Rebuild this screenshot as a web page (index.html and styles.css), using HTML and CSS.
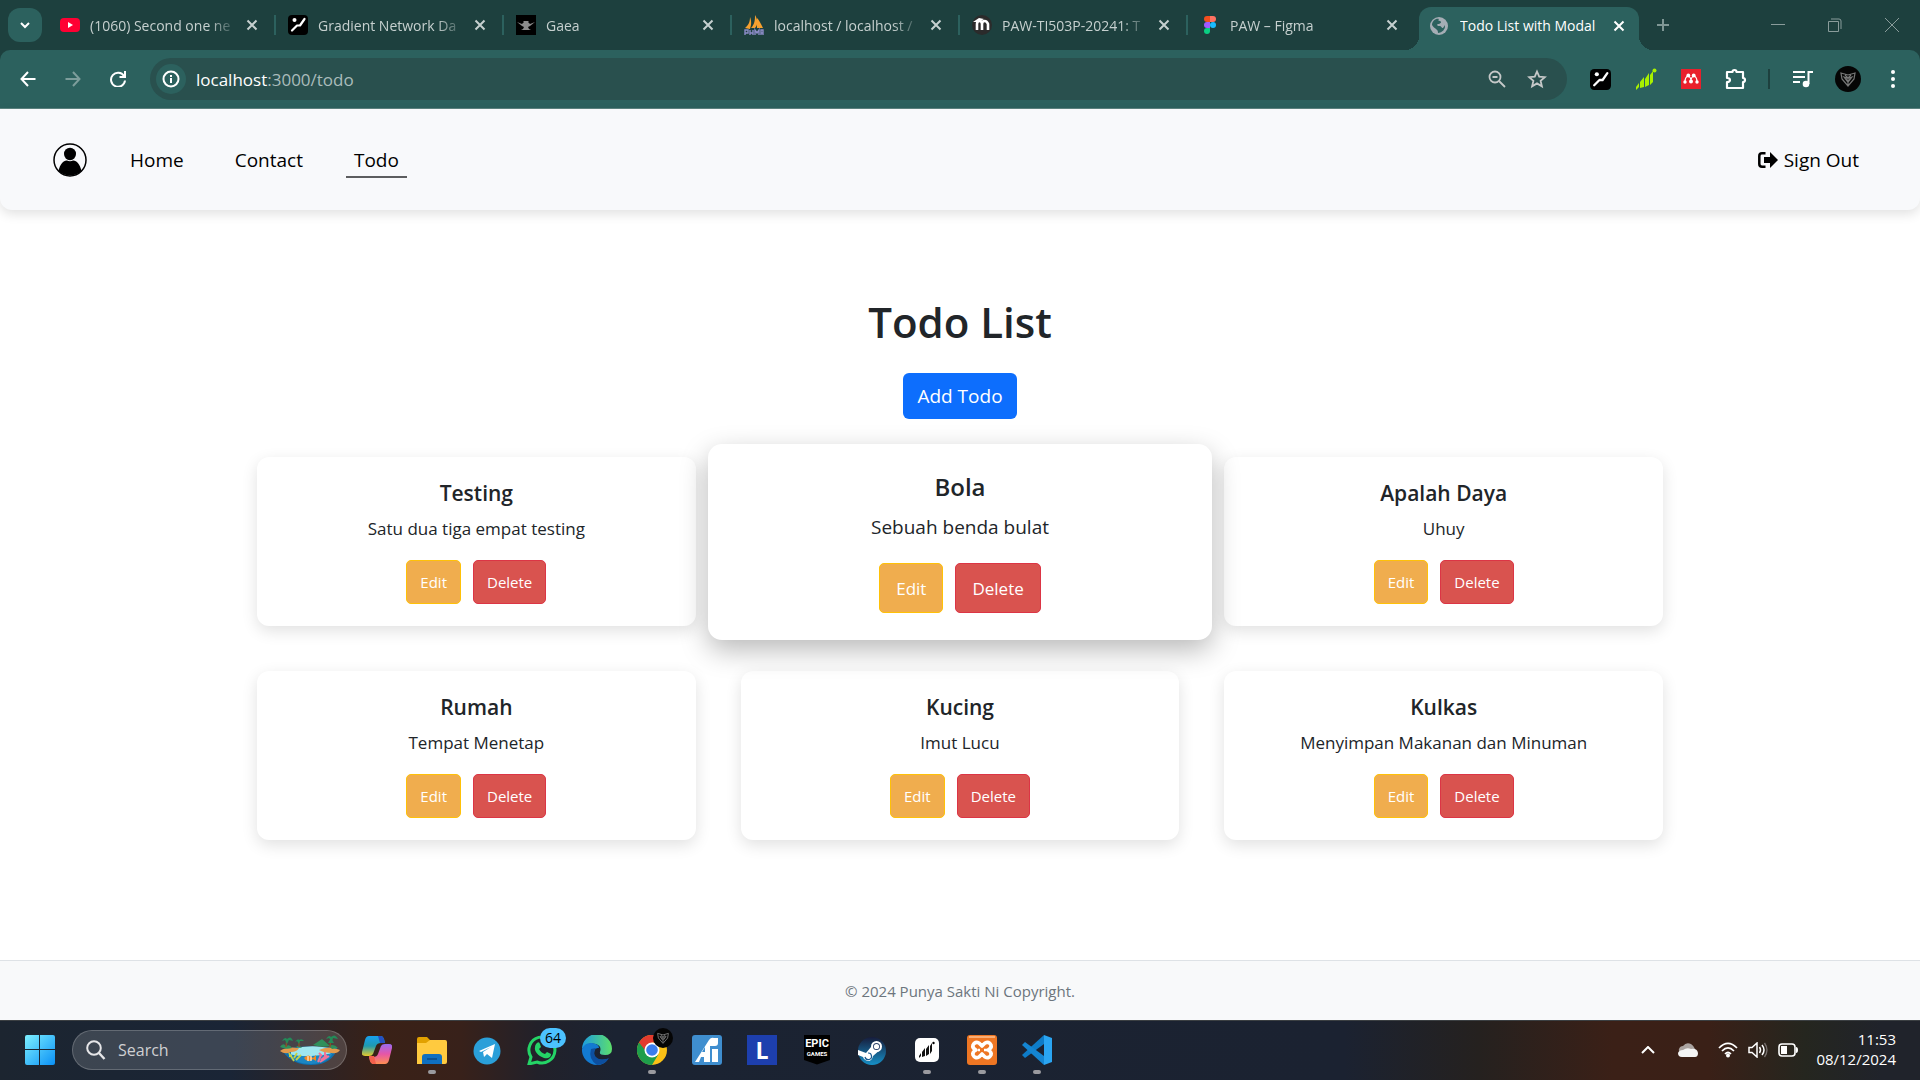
FILE: index.html
```html
<!DOCTYPE html>
<html lang="en">
<head>
<meta charset="utf-8">
<meta name="viewport" content="width=device-width, initial-scale=1">
<title>Todo List with Modal</title>
<link rel="stylesheet" href="styles.css">
</head>
<body>
<svg class="defs" aria-hidden="true">
  <symbol id="x" viewBox="0 0 12 12"><path d="M1.5 1.5l9 9m0-9l-9 9" fill="none" stroke="currentColor" stroke-width="2"/></symbol>
  <symbol id="gradient" viewBox="0 0 20 20"><rect width="20" height="20" rx="4"/><path d="M16.500 4 12 10.500H9L4 15.500" fill="none" stroke="#fff" stroke-width="2.200" stroke-linecap="round" stroke-linejoin="round"/><circle cx="6.500" cy="5" r="2" fill="#fff"/></symbol>
  <symbol id="crest" viewBox="0 0 26 26"><circle cx="13" cy="13" r="13" fill="#050505"/><path d="M6 7l7 2 7-2-1 6-6 7-6-7zM9 11l3 1v3zM17 11l-3 1v3zM13 14v5M10 9l3 3 3-3" fill="none" stroke="#777" stroke-width="1.200"/></symbol>
</svg>

<header class="browser">
  <div class="tabstrip">
    <button class="tab-search" aria-label="Search tabs"><svg viewBox="0 0 12 12" width="12" height="12"><path d="M2 4l4 4 4-4" fill="none" stroke="#fff" stroke-width="2"/></svg></button>
    <div class="tab">
      <svg class="favicon" viewBox="0 0 20 20"><rect y="3" width="20" height="14" rx="4" fill="#ff0033"/><path d="M8 7v6l5-3z" fill="#fff"/></svg>
      <span class="tab-title">(1060) Second one ne</span>
      <button class="tab-close" aria-label="Close tab"><svg width="12" height="12"><use href="#x"/></svg></button>
    </div>
    <div class="tab">
      <svg class="favicon"><use href="#gradient"/></svg>
      <span class="tab-title">Gradient Network Da</span>
      <button class="tab-close" aria-label="Close tab"><svg width="12" height="12"><use href="#x"/></svg></button>
    </div>
    <div class="tab">
      <svg class="favicon" viewBox="0 0 20 20"><rect width="20" height="20"/><path d="M1 7l5 2 2-2-1-1h6l-1 1 2 2 5-2-5 4-2 1 1 2 2 1H5l2-1 1-2-2-1z" fill="#8c8c8c"/></svg>
      <span class="tab-title">Gaea</span>
      <button class="tab-close" aria-label="Close tab"><svg width="12" height="12"><use href="#x"/></svg></button>
    </div>
    <div class="tab">
      <svg class="favicon" viewBox="0 0 20 20"><path d="M1 13C5 10 6 6 6 2c2 5 1 9 0 12zM7 13C11 9 11 4 11 0c3 5 3 10 0 13zM13 13V3c2 2 4 6 6 10z" fill="#f7a12f"/><path d="M1 20v-5h3v3H1m5 2v-5m0 3h3m0-3v5m2 0v-5l2 3 2-3v5m2 0v-5h2v5m-2-2h2" fill="none" stroke="#8c8cc8" stroke-width="1.400"/></svg>
      <span class="tab-title">localhost / localhost /</span>
      <button class="tab-close" aria-label="Close tab"><svg width="12" height="12"><use href="#x"/></svg></button>
    </div>
    <div class="tab">
      <svg class="favicon" viewBox="0 0 20 20"><circle cx="10" cy="10" r="10" fill="#2b2b2b"/><path d="M5 15V9q0-3 2.500-3T10 9v6m0-6q0-3 2.500-3T16 9v6" fill="none" stroke="#fff" stroke-width="2.600"/><path d="M1 7l6-4 5 1-5 3z" fill="#fff"/></svg>
      <span class="tab-title">PAW-TI503P-20241: T</span>
      <button class="tab-close" aria-label="Close tab"><svg width="12" height="12"><use href="#x"/></svg></button>
    </div>
    <div class="tab">
      <svg class="favicon" viewBox="0 0 20 20"><path d="M10 1H7a3 3 0 000 6h3z" fill="#f24e1e"/><path d="M10 1h3a3 3 0 010 6h-3z" fill="#ff7262"/><path d="M10 7H7a3 3 0 000 6h3z" fill="#a259ff"/><circle cx="13" cy="10" r="3" fill="#1abcfe"/><path d="M10 13H7a3 3 0 103 3z" fill="#0acf83"/></svg>
      <span class="tab-title">PAW – Figma</span>
      <button class="tab-close" aria-label="Close tab"><svg width="12" height="12"><use href="#x"/></svg></button>
    </div>
    <div class="tab tab-active">
      <svg class="favicon" viewBox="0 0 20 20"><circle cx="9" cy="10" r="9" fill="#a5adb5"/><path d="M9 3c-1 1-1 2 1 2 2 1 1 2-1 3-3 0-2 2 0 2 3 0 2 2 4 2l2-3a7 7 0 01-7 8c0-3-1-3-2-4S3 11 2 9c0-4 4-7 7-6z" fill="#2c615e"/></svg>
      <span class="tab-title">Todo List with Modal</span>
      <button class="tab-close" aria-label="Close tab"><svg width="12" height="12"><use href="#x"/></svg></button>
    </div>
    <button class="tab-new" aria-label="New tab"><svg viewBox="0 0 14 14" width="14" height="14"><path d="M7 1v12M1 7h12" stroke="#7f9795" stroke-width="2"/></svg></button>
    <div class="window-buttons">
      <button aria-label="Minimize"><svg viewBox="0 0 14 14" width="14" height="14"><path d="M0 6.500h14" stroke="#8a9c9b"/></svg></button>
      <button aria-label="Restore"><svg viewBox="0 0 14 14" width="14" height="14"><path d="M.5 3.500h10v10H.5zM3 1h8q2 0 2 2v8" fill="none" stroke="#8a9c9b"/></svg></button>
      <button aria-label="Close window"><svg viewBox="0 0 14 14" width="14" height="14"><path d="M0 0l14 14M14 0L0 14" stroke="#8a9c9b"/></svg></button>
    </div>
  </div>

  <div class="toolbar">
    <button class="tool" aria-label="Back"><svg viewBox="0 0 16 16" width="16" height="16"><path d="M15.500 8H2m6-7L1.500 8 8 15" fill="none" stroke="#fff" stroke-width="2"/></svg></button>
    <button class="tool" aria-label="Forward"><svg viewBox="0 0 16 16" width="16" height="16"><path d="M.5 8H14M8 1l6.500 7L8 15" fill="none" stroke="#7d9d9b" stroke-width="2"/></svg></button>
    <button class="tool" aria-label="Reload"><svg viewBox="0 0 16 16" width="16" height="16"><path d="M14 5A7 7 0 1015 9.500M15 0v6H9.500" fill="none" stroke="#fff" stroke-width="2"/></svg></button>
    <div class="omnibox">
      <button class="site-info" aria-label="Site information"><svg viewBox="0 0 18 18" width="18" height="18"><circle cx="9" cy="9" r="7.500" fill="none" stroke="#fff" stroke-width="2"/><path d="M9 8v5M9 5v2" stroke="#fff" stroke-width="2"/></svg></button>
      <span class="url"><b>localhost</b>:3000/todo</span>
      <button class="tool tool-narrow" aria-label="Zoom"><svg viewBox="0 0 18 18" width="18" height="18"><circle cx="7" cy="7" r="5.500" fill="none" stroke="#c5c8c8" stroke-width="1.800"/><path d="M11 11l6 6M4.500 7h5" stroke="#c5c8c8" stroke-width="1.800"/></svg></button>
      <button class="tool tool-narrow" aria-label="Bookmark"><svg viewBox="0 0 20 20" width="20" height="20"><path d="M10 2.500l2.200 5.100 5.600.5-4.200 3.700 1.300 5.500L10 14.400l-4.900 2.900 1.300-5.500L2.200 8.100l5.600-.5z" fill="none" stroke="#c5c8c8" stroke-width="1.800"/></svg></button>
    </div>
    <div class="extensions">
      <button class="tool" aria-label="Gradient"><svg width="21" height="21"><use href="#gradient"/></svg></button>
      <button class="tool" aria-label="Grass"><svg viewBox="0 0 22 22" width="22" height="22"><path d="M1 22v-3l3-4v4zM5 20v-6l4-5v10zM10 19v-8l4-6v12zM15 17V7l3-4v11z" fill="#a8f000"/><circle cx="19.500" cy="2.500" r="2" fill="#a8f000"/></svg></button>
      <button class="tool" aria-label="Mendeley"><svg viewBox="0 0 20 20" width="20" height="20"><rect width="20" height="20" fill="#e9202c"/><path d="M4 13q0-5 3-6 3 1 3 5 0-4 3-5 3 1 3 6" fill="none" stroke="#fff" stroke-width="1.200"/><g fill="#fff"><circle cx="7.300" cy="6.500" r="1.900"/><circle cx="12.700" cy="6.500" r="1.900"/><circle cx="4" cy="13" r="1.700"/><circle cx="10" cy="12.500" r="2"/><circle cx="16" cy="13" r="1.700"/></g></svg></button>
      <button class="tool" aria-label="Extensions"><svg viewBox="0 0 22 22" width="22" height="22"><path d="M2 4h5.500q0-2 2-2t2 2H18v6q2 0 2 2t-2 2v6H2v-6q3 0 3-2t-3-2z" fill="none" stroke="#fff" stroke-width="2.200" stroke-linejoin="round"/></svg></button>
      <span class="divider"></span>
      <button class="tool" aria-label="Media"><svg viewBox="0 0 20 18" width="20" height="18"><path d="M0 2h12M0 7h12M0 12h7M15.500 14V2H20" fill="none" stroke="#fff" stroke-width="2"/><circle cx="13" cy="14" r="3.300" fill="#fff"/></svg></button>
      <button class="tool" aria-label="Profile"><svg width="26" height="26"><use href="#crest"/></svg></button>
      <button class="tool" aria-label="Menu"><svg viewBox="0 0 6 20" width="6" height="20"><g fill="#fff"><circle cx="3" cy="3" r="2"/><circle cx="3" cy="10" r="2"/><circle cx="3" cy="17" r="2"/></g></svg></button>
    </div>
  </div>
</header>

<div class="page">
  <nav class="navbar">
    <svg class="avatar" viewBox="0 0 34 34"><circle cx="17" cy="17" r="16" fill="none" stroke="#000" stroke-width="1.500"/><ellipse cx="17" cy="11" rx="6" ry="6.200"/><path d="M5.500 28C7 21 11 17 14 17.500q3 1.500 6 0c3-.5 7 3.500 8.500 10.500A17 17 0 015.500 28z"/></svg>
    <a class="nav-link" href="#home">Home</a>
    <a class="nav-link" href="#contact">Contact</a>
    <a class="nav-link nav-current" href="#todo">Todo</a>
    <a class="sign-out" href="#signout"><svg viewBox="0 0 20 16" width="20" height="16"><path d="M7.500 1.300H4Q1.300 1.300 1.300 4v8q0 2.700 2.700 2.700h3.500" fill="none" stroke="#000" stroke-width="2.500"/><path d="M6 5h6V0l8 8-8 8v-5H6z"/></svg>Sign Out</a>
  </nav>

  <main class="content">
    <h1 class="heading">Todo List</h1>
    <button class="add">Add Todo</button>
    <div class="cards">
      <article class="card"><h2>Testing</h2><p>Satu dua tiga empat testing</p><div class="actions"><button class="btn btn-edit">Edit</button><button class="btn btn-delete">Delete</button></div></article>
      <article class="card card-raised"><h2>Bola</h2><p>Sebuah benda bulat</p><div class="actions"><button class="btn btn-edit">Edit</button><button class="btn btn-delete">Delete</button></div></article>
      <article class="card"><h2>Apalah Daya</h2><p>Uhuy</p><div class="actions"><button class="btn btn-edit">Edit</button><button class="btn btn-delete">Delete</button></div></article>
      <article class="card"><h2>Rumah</h2><p>Tempat Menetap</p><div class="actions"><button class="btn btn-edit">Edit</button><button class="btn btn-delete">Delete</button></div></article>
      <article class="card"><h2>Kucing</h2><p>Imut Lucu</p><div class="actions"><button class="btn btn-edit">Edit</button><button class="btn btn-delete">Delete</button></div></article>
      <article class="card"><h2>Kulkas</h2><p>Menyimpan Makanan dan Minuman</p><div class="actions"><button class="btn btn-edit">Edit</button><button class="btn btn-delete">Delete</button></div></article>
    </div>
  </main>

  <footer class="footer">© 2024 Punya Sakti Ni Copyright.</footer>
</div>

<div class="taskbar">
  <button class="start" aria-label="Start"><svg viewBox="0 0 30 30" width="30" height="30"><defs><linearGradient id="win" x2="1" y2="1"><stop stop-color="#7df0ff"/><stop offset="1" stop-color="#0a90f5"/></linearGradient></defs><path d="M0 2q0-2 2-2h12v14H0zM15 0h13q2 0 2 2v12H15zM0 15h14v15H2q-2 0-2-2zM15 15h15v13q0 2-2 2H15z" fill="url(#win)"/></svg></button>
  <label class="search">
    <svg viewBox="0 0 20 20" width="20" height="20"><circle cx="8" cy="8" r="6.800" fill="none" stroke="#e6e6e8" stroke-width="2"/><path d="M13 13l5.500 6" stroke="#e6e6e8" stroke-width="2.400"/></svg>
    <input type="text" placeholder="Search" aria-label="Search">
    <svg viewBox="0 0 62 32" width="62" height="32">
      <path d="M4 16Q20 10 58 14L57 18Q50 31 32 31T4 18z" fill="#0e6fae"/><path d="M12 15q20-5 38-1l2 7q-20 4-40 0z" fill="#9fe6ef"/><path d="M9 20q22 5 45-1-6 11-22 11T9 20z" fill="#1b87c4"/>
      <path d="M1 17q6-5 19-3-2 4-8 4-6 3-11-1zM40 16q10-5 21 0-3 4-8 3-8 0-13-3z" fill="#e39a4c"/><path d="M1 13q3-5 6-1 4-2 6 2-6 2-12-1zM17 13q3-3 6 1zM50 12q5-3 9 2l-6 1zM34 11l9-6 8 7q-8 2-17-1z" fill="#2f8f5b"/>
      <path d="M7 13l1-8M20 13V7M51 13l1-9" stroke="#875228" stroke-width="1.500"/><path d="M3 7q3-5 5-2 4-4 6 2l-4-1-2 4-2-4zM16 8q3-4 4-2 3-2 5 1l-4 0-1 3-2-3zM47 5q3-5 5-2 4-4 7 2l-5-1-1 4-3-4zM49 9l3-5 3 5" fill="#238a58"/>
      <path d="M10 19l5 8m-2-5l-3 0m5 2l3-5m-1 7l5-5" stroke="#c5d24a" stroke-width="1.800"/><path d="M39 28l3-7m0 5l6-5m-5 1l-3-3m6 3v-4m-5 10l9-6" stroke="#f0739a" stroke-width="2"/><path d="M25 24q4-5 9 0l3-3v6l-3-2q-5 5-9-1z" fill="#f58a1f"/><path d="M29 22v5M32 22v5" stroke="#fff"/>
    </svg>
  </label>
  <div class="apps">
    <button class="app" aria-label="Copilot"><svg viewBox="0 0 30 30"><defs><linearGradient id="c1" x2="0" y2="1"><stop stop-color="#18a0ee"/><stop offset=".5" stop-color="#1f9bb0"/><stop offset="1" stop-color="#e7cb2c"/></linearGradient><linearGradient id="c2" x2="0" y2="1"><stop stop-color="#9a6bf2"/><stop offset=".5" stop-color="#e656a7"/><stop offset="1" stop-color="#ff8f52"/></linearGradient></defs><path d="M7 1h12q2 0 3 3l1 4h-4q-4 0-5 3l-3 8q-1 2-4 2H3q-4 0-3-4L3 5q1-4 4-4z" fill="url(#c1)"/><path d="M16 1h3q2 0 3 3l1 4h-5z" fill="#2451c4"/><path d="M23 29H11q-2 0-3-3l-1-4h4q4 0 5-3l3-8q1-2 4-2h4q4 0 3 4l-3 12q-1 4-4 4z" fill="url(#c2)"/><path d="M7 21h5l2 8h-3q-2 0-3-3z" fill="#f4604c"/></svg></button>
    <button class="app app-open" aria-label="File Explorer"><svg viewBox="0 0 30 30"><path d="M0 4q0-2 2-2h8l3 3h14q2 0 2 2v5H0z" fill="#e2a100"/><path d="M0 8h9l4-3h15q2 0 2 2v20q0 2-2 2H0z" fill="#ffca3f"/><path d="M5 29v-7q0-3 3-3h14q3 0 3 3v7z" fill="#0f6fc0"/><path d="M10 24h10" stroke="#0a4a87" stroke-width="1.500"/></svg></button>
    <button class="app" aria-label="Telegram"><svg viewBox="0 0 30 30"><circle cx="15" cy="16" r="13.500" fill="#2a9fd9"/><path d="M7 16l16-7-3 14-5-4-3 3-1-5 8-5-10 5z" fill="#fff"/></svg></button>
    <button class="app" aria-label="WhatsApp"><svg viewBox="0 0 30 30"><path d="M2 29l2-7A13 13 0 1110 27z" fill="none" stroke="#24d466" stroke-width="3"/><path d="M10 8q2-2 3 1l1 3-2 2q2 4 6 5l2-2 4 2c0 4-4 5-7 4-6-2-10-7-9-11 0-2 1-3 2-4z" fill="#24d466"/></svg><span class="count">64</span></button>
    <button class="app" aria-label="Edge"><svg viewBox="0 0 30 30"><defs><linearGradient id="e1"><stop stop-color="#1c9be0"/><stop offset="1" stop-color="#5de06b"/></linearGradient></defs><path d="M0 14a15 15 0 0130 0q0 6-7 6-6 0-5-3 2-6-4-8Q5 7 0 14z" fill="url(#e1)"/><path d="M0 14q3-7 10-6 7 1 7 5-5-1-5 6 1 8 14 5-4 6-11 6A15 15 0 010 14z" fill="#137ad1"/><path d="M9 14q-3 10 6 16 8 0 12-7-9 4-14-2-2-4 1-8z" fill="#0d4f9f"/></svg></button>
    <button class="app app-open" aria-label="Chrome"><svg viewBox="0 0 30 30"><circle cx="15" cy="15" r="15" fill="#fbc116"/><path d="M15 15L2 7.500A15 15 0 0015 30l6-10z" fill="#1e9e4b"/><path d="M15 15H8L2 7.500A15 15 0 0128 7.500H15z" fill="#e33b2e"/><circle cx="15" cy="15" r="7.500" fill="#fff"/><circle cx="15" cy="15" r="5.800" fill="#3b7ded"/></svg><svg class="profile" viewBox="0 0 26 26"><use href="#crest"/></svg></button>
    <button class="app" aria-label="Ai"><svg viewBox="0 0 30 30"><rect width="30" height="30" rx="3" fill="#3f8ecf"/><path d="M3 27L17 5q2-3 5-2h4v5q0 3-3 3h-5v16h-6v-5H9l-2 5zM10 17h3v-5z" fill="#fff" fill-rule="evenodd"/><path d="M20 14h6v13h-6z" fill="#fff"/></svg></button>
    <button class="app app-letter" aria-label="L">L</button>
    <button class="app" aria-label="Epic Games"><span class="epic"><b>EPIC</b><small>GAMES</small></span></button>
    <button class="app" aria-label="Steam"><svg viewBox="0 0 30 30"><defs><linearGradient id="st" x2="0" y2="1"><stop stop-color="#171c3b"/><stop offset="1" stop-color="#1690c7"/></linearGradient></defs><circle cx="15" cy="16" r="14" fill="url(#st)"/><path d="M1 15l8 3 5-6 10 2-8 7q-1 5-5 5-4-1-5-4l-5-2z" fill="#fff"/><circle cx="19.500" cy="11.500" r="4.500" fill="#2b4169" stroke="#fff" stroke-width="2"/><circle cx="19.500" cy="11.500" r="2.600" fill="#fff"/><path d="M8 22a3.300 3.300 0 103-4" fill="none" stroke="#1a5b91" stroke-width="1.200"/></svg></button>
    <button class="app app-open" aria-label="Grass"><svg viewBox="0 0 30 30"><rect x="3" y="3" width="24" height="24" rx="5" fill="#fff"/><path d="M7 23v-2l2-3v3zM10 22v-5l3-4v8zM14 21v-7l3-4v9zM18 19v-8l2-3v8z" fill="#111"/><circle cx="21.500" cy="8" r="1.200"/></svg></button>
    <button class="app app-open" aria-label="XAMPP"><svg viewBox="0 0 30 30"><rect width="30" height="30" rx="3" fill="#ee7623"/><path d="M2 1h26v2H2z" fill="#f9ad74"/><path d="M9 15q-4-2-3-5 2-4 6-2l3 3 3-3q4-2 6 2 1 3-3 5 4 2 3 5-2 4-6 2l-3-3-3 3q-4 2-6-2-1-3 3-5z" fill="none" stroke="#fff" stroke-width="3.600" stroke-linejoin="round"/><path d="M11 15h2M17 15h3" stroke="#fff" stroke-width="2.500"/></svg></button>
    <button class="app app-open" aria-label="Visual Studio Code"><svg viewBox="0 0 30 30"><path d="M22 0l8 3v24l-8 3z" fill="#2aa5f2"/><path d="M22 0v9L3 23l-3-3z" fill="#0e7cc8"/><path d="M22 30v-9L3 7l-3 3z" fill="#1485d2"/></svg></button>
  </div>
  <div class="tray">
    <svg viewBox="0 0 14 8" width="14" height="8"><path d="M1 7l6-6 6 6" fill="none" stroke="#fff" stroke-width="2"/></svg>
    <svg class="cloud" viewBox="0 0 20 14" width="20" height="14"><path d="M4 9q-4 0-3-3t4-3q3-4 8-2 3 2 4 5z" fill="#aaa3a0"/><path d="M4 14q-4 0-4-4 1-3 5-3 4-3 8-1 6-1 7 4 0 4-3 4z" fill="#f4f4f4"/></svg>
    <svg viewBox="0 0 20 16" width="20" height="16"><path d="M1 6q9-9 18 0M4 9q6-6 12 0M7 12q3-3 6 0" fill="none" stroke="#fff" stroke-width="1.700"/><circle cx="10" cy="13.500" r="2" fill="#fff"/></svg>
    <svg viewBox="0 0 20 16" width="20" height="16"><path d="M1 5.500h3L9 1v14l-5-4.500H1z" fill="none" stroke="#fff" stroke-width="1.500"/><path d="M11.500 5q2 3 0 6M14 3q4 5 0 10" fill="none" stroke="#fff" stroke-width="1.500"/><path d="M16.500 1q5 7 0 14" fill="none" stroke="#77706e" stroke-width="1.300"/></svg>
    <svg viewBox="0 0 20 14" width="20" height="14"><rect x="1" y="1" width="16" height="12" rx="3" fill="none" stroke="#fff" stroke-width="1.600"/><path d="M3 3h6v8H3zM18 4q2 0 2 3t-2 3z" fill="#fff"/></svg>
    <div class="clock"><span>11:53</span><span>08/12/2024</span></div>
  </div>
</div>
</body>
</html>
```
FILE: styles.css
```css
* { box-sizing: border-box; }

body {
  margin: 0;
  min-height: 100vh;
  display: flex;
  flex-direction: column;
  font-family: "Open Sans", "Noto Sans", sans-serif;
  font-size: 19px;
  color: #212529;
  background: #fff;
}

button {
  font: inherit;
  color: inherit;
  border: 0;
  padding: 0;
  background: none;
}

svg { display: block; flex: none; }
.defs { position: absolute; width: 0; height: 0; }

/* Browser frame */
.browser { background: #1d403e; }

.tabstrip {
  display: flex;
  align-items: center;
  height: 50px;
  padding-left: 8px;
  color: #c6d0cf;
  font-size: 14px;
}

.tab-search {
  display: flex;
  align-items: center;
  justify-content: center;
  flex: none;
  width: 34px;
  height: 34px;
  margin-right: 6px;
  border-radius: 12px;
  background: #2c615e;
}

.tab {
  position: relative;
  display: flex;
  align-items: center;
  flex: 0 1 228px;
  min-width: 0;
  height: 42px;
  padding: 0 18px 0 12px;
}

.tab:not(.tab-active)::after {
  content: "";
  position: absolute;
  right: 0;
  top: 11px;
  width: 2px;
  height: 20px;
  background: #2c615e;
}

.tab:nth-last-child(4)::after { display: none; }

.favicon { width: 20px; height: 20px; margin-right: 10px; }

.tab-title {
  flex: 1;
  min-width: 0;
  overflow: hidden;
  white-space: nowrap;
  -webkit-mask-image: linear-gradient(90deg, #000 80%, transparent);
  mask-image: linear-gradient(90deg, #000 80%, transparent);
}

.tab-close { flex: none; margin-left: 8px; }

.tab-active {
  align-self: flex-end;
  flex-basis: 220px;
  height: 43px;
  margin-left: 3px;
  padding: 0 14px 6px 11px;
  border-radius: 12px 12px 0 0;
  background: #2c615e;
  color: #fff;
}

.tab-active .tab-title { -webkit-mask-image: none; mask-image: none; }

.tab-active::before,
.tab-active::after {
  content: "";
  position: absolute;
  bottom: 0;
  width: 14px;
  height: 14px;
}

.tab-active::before { right: 100%; background: radial-gradient(circle at 0 0, transparent 14px, #2c615e 14px); }
.tab-active::after { left: 100%; background: radial-gradient(circle at 100% 0, transparent 14px, #2c615e 14px); }

.tab-new { margin-left: 13px; padding: 0 4px; }

.window-buttons { display: flex; margin-left: auto; }
.window-buttons button { display: flex; justify-content: center; width: 57px; }

.toolbar {
  display: flex;
  align-items: center;
  height: 59px;
  padding: 0 5px;
  border-bottom: 1px solid #5c8481;
  border-radius: 10px 10px 0 0;
  background: #2c615e;
}

.tool { display: flex; justify-content: center; width: 45px; }
.tool-narrow { width: 40px; }

.omnibox {
  display: flex;
  align-items: center;
  flex: 1;
  height: 42px;
  margin: 0 11px 0 10px;
  padding: 0 10px 0 6px;
  border-radius: 21px;
  background: #29504e;
}

.site-info {
  display: flex;
  align-items: center;
  justify-content: center;
  width: 30px;
  height: 30px;
  margin-right: 10px;
  border-radius: 50%;
  background: #2c615e;
}

.url { flex: 1; font-size: 17px; color: #a9bcbb; }
.url b { font-weight: 400; color: #fff; }

.extensions { display: flex; align-items: center; }
.divider { width: 2px; height: 20px; margin: 0 10px; background: #1d403e; }

/* Page */
.page { flex: 1; display: flex; flex-direction: column; }

.navbar {
  display: flex;
  align-items: center;
  height: 101px;
  padding: 0 61px 0 53px;
  border-radius: 0 0 12px 12px;
  background: #f8f9fb;
  box-shadow: 0 4px 12px rgba(0, 0, 0, .12);
}

.navbar a { color: #000; text-decoration: none; }

.avatar { width: 34px; height: 34px; margin-right: 35px; }

.nav-link {
  margin-right: 35px;
  padding: 4px 8px 2px;
  line-height: 28px;
  border-bottom: 2px solid transparent;
}

.nav-current { border-color: #5c5d5f; }

.sign-out { display: flex; align-items: center; gap: 6px; margin-left: auto; }

.content {
  flex: 1;
  display: flex;
  flex-direction: column;
  align-items: center;
  padding: 82px 24px 56px;
}

.heading { margin: 0 0 21px; font-size: 42px; line-height: 60px; font-weight: 600; }

.add {
  height: 46px;
  margin-bottom: 38px;
  padding: 0 14px;
  border-radius: 6px;
  background: #0d6efd;
  color: #fff;
}

.cards {
  display: grid;
  grid-template-columns: repeat(3, 1fr);
  gap: 45px;
  width: 100%;
  max-width: 1406px;
}

.card {
  padding: 22px;
  border-radius: 12px;
  background: #fff;
  text-align: center;
  box-shadow: 0 5px 16px rgba(0, 0, 0, .12);
}

.card h2 { margin: 0 0 8px; font-size: 21px; line-height: 28px; font-weight: 600; }
.card p { margin: 0 0 17px; font-size: 17px; line-height: 28px; }

.actions { display: flex; justify-content: center; gap: 12px; }

.btn {
  height: 44px;
  padding: 0 13px;
  border: 1px solid;
  border-radius: 5px;
  font-size: 15px;
  color: #fff;
}

.btn-edit { background: #f0ad4e; border-color: #ffc107; }
.btn-delete { background: #d9534f; border-color: #dc3545; }

/* The hovered card grows over its neighbours */
.card-raised {
  position: relative;
  margin: -13px -33px -14px;
  padding: 27px 26px 26px;
  border-radius: 14px;
  box-shadow: 0 10px 28px rgba(0, 0, 0, .28);
}

.card-raised h2 { font-size: 24px; line-height: 32px; }
.card-raised p { margin-bottom: 20px; font-size: 19px; line-height: 32px; }
.card-raised .btn { height: 50px; padding: 0 16px; font-size: 17px; }

.footer {
  padding: 17px 16px 15px;
  border-top: 1px solid #dee2e6;
  background: #f8f9fa;
  color: #6c757d;
  font-size: 15px;
  line-height: 27px;
  text-align: center;
}

/* Taskbar */
.taskbar {
  display: flex;
  align-items: center;
  height: 60px;
  padding: 0 24px 2px 25px;
  border-top: 1px solid #3b3f42;
  background: linear-gradient(90deg, #1c2530 0, #1a2536 12%, #3a2117 20%, #38211a 24%, #22212a 28%, #1b2332 32%, #1b2231 70%, #25211f 77%, #3b2017 84%, #3a2017 89%, #25261f 94%, #20232b 98%);
  color: #fff;
}

.start { margin-right: 17px; }

.search {
  display: flex;
  align-items: center;
  width: 275px;
  height: 40px;
  padding: 0 5px 0 13px;
  border: 1px solid rgba(255, 255, 255, .2);
  border-radius: 20px;
  background: rgba(255, 255, 255, .15);
}

.search input {
  flex: 1;
  min-width: 0;
  margin-left: 12px;
  padding: 0;
  border: 0;
  outline: 0;
  background: none;
  font: inherit;
  font-size: 16px;
  color: #fff;
}

.search input::placeholder { color: #cfd0d3; opacity: 1; }

.apps { display: flex; gap: 25px; margin-left: 15px; }

.app { position: relative; width: 30px; height: 30px; }
.app > svg:first-child { width: 30px; height: 30px; }

.app-open::after {
  content: "";
  position: absolute;
  left: 11px;
  top: 35px;
  width: 8px;
  height: 4px;
  border-radius: 2px;
  background: #9a9a9f;
}

.count {
  position: absolute;
  right: -9px;
  top: -7px;
  width: 26px;
  border-radius: 10px;
  background: #4cc2ff;
  color: #000;
  font-size: 14px;
  line-height: 20px;
}

.profile { position: absolute; right: -6px; top: -7px; width: 20px; height: 20px; }

.app-letter { background: #1d3fae; font-size: 23px; font-weight: 700; line-height: 30px; }

.epic {
  display: flex;
  flex-direction: column;
  align-items: center;
  width: 26px;
  height: 30px;
  margin: 0 auto;
  padding-top: 3px;
  background: #000;
  clip-path: polygon(0 0, 100% 0, 100% 85%, 50% 100%, 0 85%);
  font-family: Roboto, sans-serif;
}

.epic b { font-size: 11px; line-height: 12px; }
.epic small { font-size: 6px; font-weight: 700; line-height: 8px; }

.tray { display: flex; align-items: center; gap: 10px; margin-left: auto; }
.cloud { margin: 0 10px 0 13px; }

.clock {
  display: flex;
  flex-direction: column;
  align-items: flex-end;
  margin-left: 8px;
  padding-bottom: 2px;
  font-size: 15px;
  line-height: 20px;
}
```
